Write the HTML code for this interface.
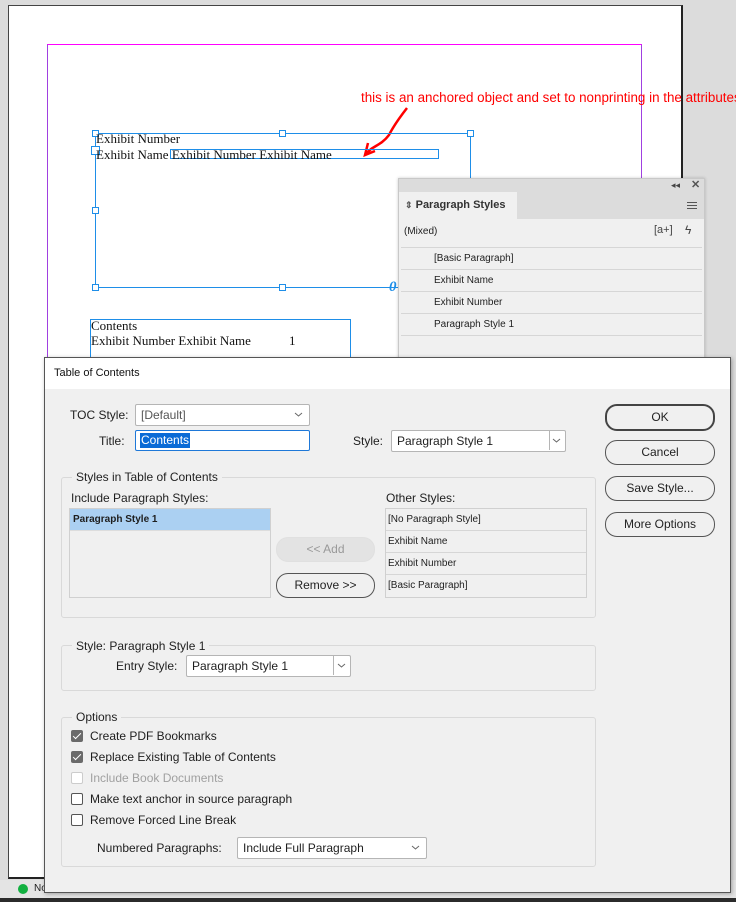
<!DOCTYPE html>
<html><head><meta charset="utf-8"><style>
*{margin:0;padding:0;box-sizing:border-box}
body{width:736px;height:902px;overflow:hidden;background:#dcdcdc;position:relative;font-family:"Liberation Sans",sans-serif;font-size:12px;color:#1e1e1e}
.a{position:absolute}
.h{position:absolute;width:7px;height:7px;border:1px solid #1e8ee8;background:#fff}
.serif{font-family:"Liberation Serif",serif;font-size:13px;color:#111;line-height:15px}
.btn{position:absolute;border:1px solid #555;border-radius:12px;background:#f0f0f0;text-align:center;font-size:12px;color:#222;line-height:23px}
.dd{position:absolute;background:#fff;border:1px solid #b5b5b5;border-radius:2px;font-size:12px;line-height:20px;padding-left:5px}
.dd svg{position:absolute;top:7px}
.grp{position:absolute;border:1px solid #d9d9d9;border-radius:3px}
.lg{position:absolute;background:#f0f0f0;padding:0 4px;font-size:12px;color:#222}
.cb{position:absolute;width:12px;height:12px;border:1px solid #555;border-radius:2px;background:#fff}
.cb.on{background:#6a6a6a;border-color:#6a6a6a}
.cb.on:after{content:"";position:absolute;left:3px;top:0px;width:3px;height:7px;border:solid #fff;border-width:0 1.5px 1.5px 0;transform:rotate(45deg)}
.row{position:absolute;left:0;right:0;border-bottom:1px solid #d6d6d6;font-size:10px;line-height:21px;padding-left:33px}
</style></head><body>
<div class="a" style="left:8px;top:5px;width:675px;height:874px;background:#fff;border-right:2px solid #222;border-bottom:2px solid #222;border-top:1px solid #444;border-left:1px solid #444"></div>
<div class="a" style="left:47px;top:44px;width:595px;height:340px;border-top:1px solid #f0f;border-left:1px solid #a040e0;border-right:1px solid #a040e0"></div>
<div class="a" style="left:361px;top:90px;color:#f00;font-size:13.4px;white-space:nowrap">this is an anchored object and set to nonprinting in the attributes</div>
<svg class="a" style="left:355px;top:105px" width="60" height="55"><path d="M52 3 C45 12 38 22 34 30 C28 38 22 40 16 44 L10 50 M13 38 L10 50 L20 46" stroke="#f00" stroke-width="2.5" fill="none"/></svg>
<div class="a" style="left:95px;top:133px;width:376px;height:155px;border:1px solid #1e8ee8"></div>
<div class="h" style="left:92px;top:130px"></div><div class="h" style="left:279px;top:130px"></div><div class="h" style="left:467px;top:130px"></div>
<div class="h" style="left:92px;top:207px"></div><div class="h" style="left:92px;top:284px"></div><div class="h" style="left:279px;top:284px"></div>
<div class="h" style="left:91px;top:146px;width:9px;height:9px"></div>
<div class="a" style="left:170px;top:149px;width:269px;height:10px;border:1px solid #1e8ee8"></div>
<div class="a serif" style="left:96px;top:131px">Exhibit Number</div>
<div class="a serif" style="left:96px;top:147px">Exhibit Name Exhibit Number Exhibit Name</div>
<div class="a" style="left:389px;top:279px;color:#1e8ee8;font-style:italic;font-weight:bold;font-family:'Liberation Serif',serif;font-size:15px">0</div>
<div class="a" style="left:90px;top:319px;width:261px;height:45px;border:1px solid #1e8ee8"></div>
<div class="a serif" style="left:91px;top:318px">Contents</div>
<div class="a serif" style="left:91px;top:333px">Exhibit Number Exhibit Name<span style="margin-left:38px">1</span></div>
<div class="a" style="left:398px;top:178px;width:307px;height:190px;background:#f0f0f0;border:1px solid #c8c8c8;box-shadow:0 0 3px rgba(0,0,0,.2)">
 <div class="a" style="left:0;top:0;right:0;height:13px;background:#dcdcdc"></div>
 <div class="a" style="left:272px;top:1px;font-size:9px;color:#444">◂◂</div>
 <div class="a" style="left:292px;top:-1px;font-size:11px;color:#555;font-weight:bold">✕</div>
 <div class="a" style="left:0;top:13px;right:0;height:27px;background:#dcdcdc"></div>
 <div class="a" style="left:0;top:13px;width:118px;height:27px;background:#f0f0f0;font-weight:bold;font-size:11px;line-height:27px;padding-left:6px;color:#333"><span style="font-size:9px;color:#555">⇕</span> Paragraph Styles</div>
 <div class="a" style="left:288px;top:23px;width:10px;height:7px;border-top:1px solid #555;border-bottom:1px solid #555"><div style="margin-top:2px;border-top:1px solid #555"></div></div>
 <div class="a" style="left:5px;top:47px;font-size:10px">(Mixed)</div>
 <div class="a" style="left:255px;top:45px;font-size:11px;color:#444">[a+]</div>
 <div class="a" style="left:286px;top:44px;font-size:12px;color:#444">ϟ</div>
 <div class="a" style="left:2px;top:68px;right:2px;border-top:1px solid #d6d6d6">
  <div class="row" style="top:0">[Basic Paragraph]</div>
  <div class="row" style="top:22px">Exhibit Name</div>
  <div class="row" style="top:44px">Exhibit Number</div>
  <div class="row" style="top:66px">Paragraph Style 1</div>
 </div>
</div>
<div class="a" style="left:0;top:880px;width:736px;height:18px;background:#e4e4e4"></div>
<div class="a" style="left:18px;top:884px;width:10px;height:10px;border-radius:50%;background:#12b040"></div>
<div class="a" style="left:34px;top:883px;font-size:10px">No errors</div>
<div class="a" style="left:0;top:898px;width:736px;height:4px;background:#2b2b2b"></div>
<div class="a" style="left:44px;top:357px;width:687px;height:536px;background:#f0f0f0;border:1px solid #555;box-shadow:1px 1px 4px rgba(0,0,0,.3)">
 <div class="a" style="left:0;top:0;right:0;height:31px;background:#fff"></div>
 <div class="a" style="left:9px;top:9px;font-size:11px;color:#111">Table of Contents</div>
 <div class="a" style="left:25px;top:50px">TOC Style:</div>
 <div class="dd" style="left:90px;top:46px;width:175px;color:#555">[Default]<svg style="right:6px" width="9" height="5"><path d="M1 1L4.5 4L8 1" stroke="#666" fill="none"/></svg></div>
 <div class="a" style="left:54px;top:76px">Title:</div>
 <div class="a" style="left:90px;top:72px;width:175px;height:21px;background:#fff;border:1px solid #1e78d8;border-radius:2px"><span style="position:absolute;left:4px;top:2px;background:#0a6bd6;color:#fff;line-height:15px;padding:0 1px">Contents</span></div>
 <div class="a" style="left:308px;top:76px">Style:</div>
 <div class="dd" style="left:346px;top:72px;width:175px">Paragraph Style 1<span style="position:absolute;right:0;top:0;width:16px;height:19px;border-left:1px solid #b5b5b5"></span><svg style="right:4px" width="9" height="5"><path d="M1 1L4.5 4L8 1" stroke="#666" fill="none"/></svg></div>
 <div class="grp" style="left:16px;top:119px;width:535px;height:141px"></div>
 <div class="lg" style="left:27px;top:112px">Styles in Table of Contents</div>
 <div class="a" style="left:26px;top:133px">Include Paragraph Styles:</div>
 <div class="a" style="left:24px;top:150px;width:202px;height:90px;background:#f0f0f0;border:1px solid #d0d0d0"><div style="height:22px;background:#abd0f2;font-weight:bold;font-size:10px;line-height:22px;padding-left:3px;border-bottom:1px solid #ddd">Paragraph Style 1</div></div>
 <div class="btn" style="left:231px;top:179px;width:99px;border-color:#e0e0e0;background:#e3e3e3;color:#999">&lt;&lt; Add</div>
 <div class="btn" style="left:231px;top:215px;width:99px">Remove &gt;&gt;</div>
 <div class="a" style="left:341px;top:133px">Other Styles:</div>
 <div class="a" style="left:340px;top:150px;width:202px;height:90px;border:1px solid #d0d0d0;font-size:10px">
  <div style="height:22px;line-height:22px;padding-left:2px;border-bottom:1px solid #d6d6d6">[No Paragraph Style]</div>
  <div style="height:22px;line-height:22px;padding-left:2px;border-bottom:1px solid #d6d6d6">Exhibit Name</div>
  <div style="height:22px;line-height:22px;padding-left:2px;border-bottom:1px solid #d6d6d6">Exhibit Number</div>
  <div style="height:22px;line-height:22px;padding-left:2px">[Basic Paragraph]</div>
 </div>
 <div class="grp" style="left:16px;top:287px;width:535px;height:46px"></div>
 <div class="lg" style="left:27px;top:281px">Style: Paragraph Style 1</div>
 <div class="a" style="left:71px;top:301px">Entry Style:</div>
 <div class="dd" style="left:141px;top:297px;width:165px">Paragraph Style 1<span style="position:absolute;right:0;top:0;width:17px;height:19px;border-left:1px solid #b5b5b5"></span><svg style="right:4px" width="9" height="5"><path d="M1 1L4.5 4L8 1" stroke="#666" fill="none"/></svg></div>
 <div class="grp" style="left:16px;top:359px;width:535px;height:150px"></div>
 <div class="lg" style="left:27px;top:352px">Options</div>
 <div class="cb on" style="left:26px;top:372px"></div><div class="a" style="left:45px;top:371px">Create PDF Bookmarks</div>
 <div class="cb on" style="left:26px;top:393px"></div><div class="a" style="left:45px;top:392px">Replace Existing Table of Contents</div>
 <div class="cb" style="left:26px;top:414px;border-color:#ccc"></div><div class="a" style="left:45px;top:413px;color:#a0a0a0">Include Book Documents</div>
 <div class="cb" style="left:26px;top:435px"></div><div class="a" style="left:45px;top:434px">Make text anchor in source paragraph</div>
 <div class="cb" style="left:26px;top:456px"></div><div class="a" style="left:45px;top:455px">Remove Forced Line Break</div>
 <div class="a" style="left:52px;top:483px">Numbered Paragraphs:</div>
 <div class="dd" style="left:192px;top:479px;width:190px">Include Full Paragraph<svg style="right:6px" width="9" height="5"><path d="M1 1L4.5 4L8 1" stroke="#666" fill="none"/></svg></div>
 <div class="btn" style="left:560px;top:46px;width:110px;border:2px solid #444">OK</div>
 <div class="btn" style="left:560px;top:82px;width:110px">Cancel</div>
 <div class="btn" style="left:560px;top:118px;width:110px">Save Style...</div>
 <div class="btn" style="left:560px;top:154px;width:110px">More Options</div>
</div>
</body></html>
